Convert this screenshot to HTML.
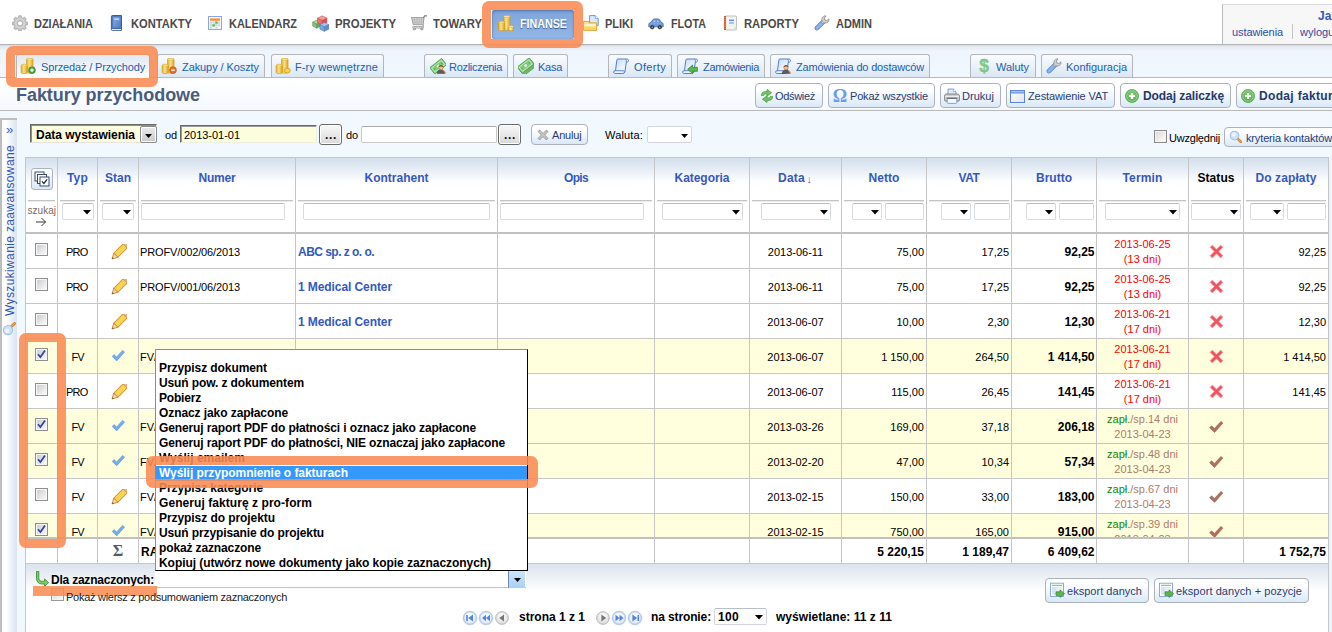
<!DOCTYPE html><html><head><meta charset="utf-8"><title>Faktury przychodowe</title><style>html,body{margin:0;padding:0;background:#fff}
#root{position:relative;width:1332px;height:632px;overflow:hidden;font-family:"Liberation Sans",sans-serif;background:#fff}
#root div,#root span,#root svg{position:absolute}
#root span span{position:static}
.t{white-space:pre}</style></head><body><div id="root"><svg width="0" height="0" style="left:0;top:0"><defs><linearGradient id="gold" x1="0" x2="1" y1="0" y2="0"><stop offset="0" stop-color="#eab52a"/><stop offset=".42" stop-color="#fff3ac"/><stop offset="1" stop-color="#e5a81a"/></linearGradient><linearGradient id="wing" x1="0" x2="1" y1="0" y2="1"><stop offset="0" stop-color="#ffffff"/><stop offset="1" stop-color="#dfe3ea"/></linearGradient><linearGradient id="scr" x1="0" x2="1" y1="0" y2="1"><stop offset="0" stop-color="#c3d8f7"/><stop offset=".6" stop-color="#eef4fd"/><stop offset="1" stop-color="#d5e3f9"/></linearGradient><linearGradient id="bookg" x1="0" x2="1" y1="0" y2="1"><stop offset="0" stop-color="#88aee2"/><stop offset="1" stop-color="#4c7cc4"/></linearGradient><radialGradient id="pgb" cx=".5" cy=".35" r=".75"><stop offset="0" stop-color="#ffffff"/><stop offset="1" stop-color="#d5e2f6"/></radialGradient><radialGradient id="pgg" cx=".5" cy=".35" r=".75"><stop offset="0" stop-color="#ffffff"/><stop offset="1" stop-color="#d4d4d4"/></radialGradient><radialGradient id="addg" cx=".5" cy=".4" r=".7"><stop offset="0" stop-color="#86cf7e"/><stop offset="1" stop-color="#46a33f"/></radialGradient></defs></svg><div style="left:0px;top:44px;width:1332px;height:1px;background:#b4b4b4"></div><div style="left:0px;top:45px;width:1332px;height:1px;background:#d9dde2"></div><div style="left:0px;top:46px;width:1332px;height:31px;background:linear-gradient(#e3e8f0 0,#eef5fd 5px,#f0f7fe 100%)"></div><div style="left:0px;top:77px;width:1332px;height:1px;background:#b9b9b9"></div><div style="left:0px;top:78px;width:1332px;height:32px;background:linear-gradient(#ffffff,#f5f9fe)"></div><div style="left:0px;top:110px;width:1332px;height:1px;background:#b9b9b9"></div><div style="left:0px;top:111px;width:1332px;height:521px;background:#f1f8fe"></div><div style="left:25px;top:563px;width:1304px;height:69px;background:#fff"></div><div style="left:25px;top:563px;width:1304px;height:28px;background:linear-gradient(#d9e2ec,#ffffff)"></div><div style="left:1222px;top:4px;width:110px;height:39px;background:#f7f7f7;border-left:1px solid #b9b9b9;border-top:1px solid #dcdcdc"></div><span id="t1" class="t" style="top:8.0px;font-size:12px;line-height:16px;color:#3a56c0;font-weight:bold;left:1318px;">Ja</span><span id="t2" class="t" style="letter-spacing:-0.098px;top:25.0px;font-size:11px;line-height:14px;color:#2f4aa8;left:1232px;">ustawienia</span><div style="left:1292px;top:24px;width:1px;height:15px;background:#c4c4c4"></div><span id="t3" class="t" style="top:25.0px;font-size:11px;line-height:14px;color:#2f4aa8;left:1300px;">wylogu</span><span id="t4" class="t" style="transform:scaleX(0.8423);transform-origin:0 50%;top:15.0px;font-size:13px;line-height:17px;color:#4a4a4a;font-weight:bold;left:34px;text-shadow:0 1px 0 #fff;">DZIAŁANIA</span><span id="t5" class="t" style="transform:scaleX(0.8560);transform-origin:0 50%;top:15.0px;font-size:13px;line-height:17px;color:#4a4a4a;font-weight:bold;left:131px;text-shadow:0 1px 0 #fff;">KONTAKTY</span><span id="t6" class="t" style="transform:scaleX(0.8406);transform-origin:0 50%;top:15.0px;font-size:13px;line-height:17px;color:#4a4a4a;font-weight:bold;left:229px;text-shadow:0 1px 0 #fff;">KALENDARZ</span><span id="t7" class="t" style="transform:scaleX(0.8705);transform-origin:0 50%;top:15.0px;font-size:13px;line-height:17px;color:#4a4a4a;font-weight:bold;left:335px;text-shadow:0 1px 0 #fff;">PROJEKTY</span><span id="t8" class="t" style="transform:scaleX(0.8697);transform-origin:0 50%;top:15.0px;font-size:13px;line-height:17px;color:#4a4a4a;font-weight:bold;left:433px;text-shadow:0 1px 0 #fff;">TOWARY</span><div style="left:491.6px;top:9.6px;width:82px;height:29px;background:linear-gradient(#7fa5da,#92b7e6);border-radius:2px;box-shadow:inset 0 1px 3px rgba(40,70,130,.55)"></div><span id="t9" class="t" style="transform:scaleX(0.8237);transform-origin:0 50%;top:15.0px;font-size:13px;line-height:17px;color:#fff;font-weight:bold;left:520px;text-shadow:0 1px 1px #3a5a95;">FINANSE</span><span id="t10" class="t" style="transform:scaleX(0.8425);transform-origin:0 50%;top:15.0px;font-size:13px;line-height:17px;color:#4a4a4a;font-weight:bold;left:605px;text-shadow:0 1px 0 #fff;">PLIKI</span><span id="t11" class="t" style="transform:scaleX(0.8263);transform-origin:0 50%;top:15.0px;font-size:13px;line-height:17px;color:#4a4a4a;font-weight:bold;left:671px;text-shadow:0 1px 0 #fff;">FLOTA</span><span id="t12" class="t" style="transform:scaleX(0.8653);transform-origin:0 50%;top:15.0px;font-size:13px;line-height:17px;color:#4a4a4a;font-weight:bold;left:744px;text-shadow:0 1px 0 #fff;">RAPORTY</span><span id="t13" class="t" style="transform:scaleX(0.8449);transform-origin:0 50%;top:15.0px;font-size:13px;line-height:17px;color:#4a4a4a;font-weight:bold;left:836px;text-shadow:0 1px 0 #fff;">ADMIN</span><svg style="left:12px;top:15px;" width="16" height="16" viewBox="0 0 16 16"><g fill="#c6c6c6" stroke="#9b9b9b" stroke-width=".7" stroke-linejoin="round"><path d="M6.600 0.500h2.800l.400 2.100 1.300.550 1.800-1.200 2 2-1.200 1.800.550 1.300 2.100.400v2.800l-2.100.400-.550 1.300 1.200 1.800-2 2-1.800-1.200-1.300.550-.400 2.100H6.600l-.400-2.100-1.300-.550-1.800 1.200-2-2 1.200-1.800-.550-1.300-2.100-.400V7.450l2.100-.400.550-1.300-1.200-1.800 2-2 1.800 1.200 1.300-.550z" transform="translate(.6 .3) scale(.925)"/></g><circle cx="8" cy="8.300" r="4.300" fill="none" stroke="#dadada" stroke-width="1.200"/><circle cx="8" cy="8.300" r="2.500" fill="#fff" stroke="#9b9b9b" stroke-width=".7"/></svg><svg style="left:108.5px;top:15px;" width="16" height="16" viewBox="0 0 16 16"><path d="M2.400 1.500c0-.600.400-1 1-1H12.500v13H3.400c-.600 0-1 .400-1 1z" fill="#4f7cc0" stroke="#2d5592" stroke-width=".9"/><path d="M12.500 13.500v2H3.400c-.600 0-1-.400-1-1s.400-1 1-1z" fill="#e9eef6" stroke="#2d5592" stroke-width=".8"/><path d="M4.200 2.200h7.400v10.400H4.200z" fill="url(#bookg)"/><rect x="5.500" y="3.600" width="4.600" height="1.100" fill="#e6eefb"/></svg><svg style="left:208px;top:16px;" width="14" height="14" viewBox="0 0 14 14"><rect x=".5" y=".5" width="13" height="13" fill="#f4f6fa" stroke="#86a8e2"/><rect x="2" y="2" width="10" height="2.800" fill="#f5903e"/><rect x="2" y="2" width="10" height="1" fill="#fbb878"/><g fill="#c4d2e8"><rect x="2" y="5.800" width="2" height="1.800"/><rect x="4.700" y="5.800" width="2" height="1.800"/><rect x="10" y="5.800" width="2" height="1.800"/><rect x="2" y="8.400" width="2" height="1.800"/><rect x="7.400" y="8.400" width="2" height="1.800"/><rect x="10" y="8.400" width="2" height="1.800"/><rect x="2" y="11" width="2" height="1.400"/><rect x="7.400" y="11" width="2" height="1.400"/></g><g fill="#5aae48" stroke="#8fd080" stroke-width=".5"><rect x="7.300" y="5.700" width="2.300" height="2.100"/><rect x="4.600" y="8.300" width="2.300" height="2.100"/></g></svg><svg style="left:312px;top:15px;" width="17" height="17" viewBox="0 0 16 16"><path d="M4.4 4.8L8.2 6.699999999999999L4.4 8.6L0.6000000000000005 6.699999999999999z" fill="#a8d69c" stroke="#5a9850" stroke-width=".5" stroke-linejoin="round"/><path d="M0.6000000000000005 6.699999999999999L4.4 8.6L4.4 12.399999999999999L0.6000000000000005 10.5z" fill="#86c078" stroke="#5a9850" stroke-width=".5" stroke-linejoin="round"/><path d="M8.2 6.699999999999999L4.4 8.6L4.4 12.399999999999999L8.2 10.5z" fill="#6aa85e" stroke="#5a9850" stroke-width=".5" stroke-linejoin="round"/><path d="M9.6 0.7999999999999998L14.0 3.0L9.6 5.2L5.199999999999999 3.0z" fill="#f5a0a0" stroke="#c84444" stroke-width=".5" stroke-linejoin="round"/><path d="M5.199999999999999 3.0L9.6 5.2L9.6 9.600000000000001L5.199999999999999 7.4z" fill="#ee7070" stroke="#c84444" stroke-width=".5" stroke-linejoin="round"/><path d="M14.0 3.0L9.6 5.2L9.6 9.600000000000001L14.0 7.4z" fill="#dc5050" stroke="#c84444" stroke-width=".5" stroke-linejoin="round"/><path d="M11.6 6.999999999999999L15.8 9.1L11.6 11.2L7.3999999999999995 9.1z" fill="#a6c6ee" stroke="#4a78b8" stroke-width=".5" stroke-linejoin="round"/><path d="M7.3999999999999995 9.1L11.6 11.2L11.6 15.399999999999999L7.3999999999999995 13.299999999999999z" fill="#7fa8de" stroke="#4a78b8" stroke-width=".5" stroke-linejoin="round"/><path d="M15.8 9.1L11.6 11.2L11.6 15.399999999999999L15.8 13.299999999999999z" fill="#5f8cca" stroke="#4a78b8" stroke-width=".5" stroke-linejoin="round"/></svg><svg style="left:411px;top:15px;" width="16" height="16" viewBox="0 0 16 16"><path d="M.5 2.500H13L12.100 9.700H2.300z" fill="#dcdcdc" stroke="#8c8c8c" stroke-width=".8" stroke-linejoin="round"/><path d="M1 4.300h11.700M1.400 6.100h11M1.800 7.900h10.500M3.400 2.500l.8 7.200M5.800 2.500l.4 7.200M8.200 2.500l0 7.200M10.600 2.500l-.4 7.200" stroke="#a2a2a2" stroke-width=".5"/><path d="M12.600 2.700l.9-1.900h2.200" fill="none" stroke="#7c7c7c" stroke-width="1.200" stroke-linecap="round"/><path d="M12.300 9.700l-.3 2.300" stroke="#8c8c8c" stroke-width=".9"/><rect x="1.600" y="11.500" width="11" height="1.600" rx=".8" fill="#ececec" stroke="#8c8c8c" stroke-width=".7"/><ellipse cx="3.400" cy="14" rx="1.300" ry="1" fill="#c4c4c4" stroke="#7c7c7c" stroke-width=".6"/><ellipse cx="10.800" cy="14" rx="1.300" ry="1" fill="#c4c4c4" stroke="#7c7c7c" stroke-width=".6"/></svg><svg style="left:498px;top:15px;" width="16" height="16" viewBox="0 0 16 16"><path d="M5.6 1.4v12.799999999999999a3.2 1.0 0 0 0 6.4 0v-12.799999999999999z" fill="url(#gold)" stroke="#cf9a14" stroke-width=".7"/><ellipse cx="8.8" cy="1.4" rx="3.2" ry="1.0" fill="#fdeea0" stroke="#d9a51c" stroke-width=".6"/><path d="M5.6 3.4a3.2 1.0 0 0 0 6.4 0" fill="none" stroke="#dba622" stroke-width=".45"/><path d="M5.6 5.3a3.2 1.0 0 0 0 6.4 0" fill="none" stroke="#dba622" stroke-width=".45"/><path d="M5.6 7.199999999999999a3.2 1.0 0 0 0 6.4 0" fill="none" stroke="#dba622" stroke-width=".45"/><path d="M5.6 9.1a3.2 1.0 0 0 0 6.4 0" fill="none" stroke="#dba622" stroke-width=".45"/><path d="M5.6 11.0a3.2 1.0 0 0 0 6.4 0" fill="none" stroke="#dba622" stroke-width=".45"/><path d="M5.6 12.9a3.2 1.0 0 0 0 6.4 0" fill="none" stroke="#dba622" stroke-width=".45"/><path d="M0.5 7.2v7.6000000000000005a2.95 1.0 0 0 0 5.9 0v-7.6000000000000005z" fill="url(#gold)" stroke="#cf9a14" stroke-width=".7"/><ellipse cx="3.45" cy="7.2" rx="2.95" ry="1.0" fill="#fdeea0" stroke="#d9a51c" stroke-width=".6"/><path d="M0.5 9.2a2.95 1.0 0 0 0 5.9 0" fill="none" stroke="#dba622" stroke-width=".45"/><path d="M0.5 11.1a2.95 1.0 0 0 0 5.9 0" fill="none" stroke="#dba622" stroke-width=".45"/><path d="M0.5 13.0a2.95 1.0 0 0 0 5.9 0" fill="none" stroke="#dba622" stroke-width=".45"/><path d="M0.5 14.9a2.95 1.0 0 0 0 5.9 0" fill="none" stroke="#dba622" stroke-width=".45"/><path d="M10.2 11.4v3.4000000000000004a2.7 1.0 0 0 0 5.4 0v-3.4000000000000004z" fill="url(#gold)" stroke="#cf9a14" stroke-width=".7"/><ellipse cx="12.899999999999999" cy="11.4" rx="2.7" ry="1.0" fill="#fdeea0" stroke="#d9a51c" stroke-width=".6"/></svg><svg style="left:583px;top:15px;" width="16" height="16" viewBox="0 0 16 16"><path d="M6.600.600h5.600l3 3v7h-8.600z" fill="#dde9fb" stroke="#5d8ad0" stroke-width=".9"/><path d="M12.200.600v3h3" fill="#fff" stroke="#5d8ad0" stroke-width=".7"/><path d="M.6 6.400h4.800l1 1.400h7.200v7.600H.6z" fill="#f9e28c" stroke="#e09a2e" stroke-width=".9"/><path d="M1.400 9h11.400v2H1.400z" fill="#fef6cc"/><path d="M1.400 12.600h11.400v2H1.400z" fill="#f4d25e"/></svg><svg style="left:648px;top:15px;" width="16" height="16" viewBox="0 0 16 16"><path d="M.8 9.800c0-1.600 1-2.300 2.400-2.500l1.500-2.500c.4-.600 1-.900 1.800-.900h3.400c.8 0 1.400.300 1.800.900l1.500 2.500c1.300.200 2 .900 2 2.500v2H.8z" fill="#7ba6e4" stroke="#3a62a6" stroke-width=".8"/><path d="M4.600 7.200l1.100-2h2v2zM8.500 5.200h1.900l1.100 2h-3z" fill="#cfe0f6" stroke="#3a62a6" stroke-width=".4"/><path d="M1.200 10h13.600" stroke="#5f8cd0" stroke-width=".8"/><circle cx="4.200" cy="12.200" r="1.800" fill="#3c3c3c" stroke="#1c1c1c" stroke-width=".5"/><circle cx="11.800" cy="12.200" r="1.800" fill="#3c3c3c" stroke="#1c1c1c" stroke-width=".5"/><circle cx="4.200" cy="12.200" r=".7" fill="#b4b4b4"/><circle cx="11.800" cy="12.200" r=".7" fill="#b4b4b4"/></svg><svg style="left:723px;top:15px;" width="16" height="16" viewBox="0 0 16 16"><rect x="2.2" y="1" width="11.3" height="14" rx="1" fill="#f3f3f3" stroke="#b9b9b9" stroke-width=".9"/><rect x="1" y="1" width="2" height="14" fill="#c0582a"/><g stroke="#e9a47c" stroke-width=".6"><path d="M.6 2.6h2.8M.6 4.4h2.8M.6 6.2h2.8M.6 8h2.8M.6 9.8h2.8M.6 11.6h2.8M.6 13.4h2.8"/></g><rect x="6" y="4.6" width="5" height="1.5" fill="#5b8fe0"/><rect x="6" y="7.4" width="5" height="1.2" fill="#7aa4e6"/><path d="M13.4 10.5l-3.6 4.4h3.6z" fill="#dcdcdc"/></svg><svg style="left:814px;top:15px;" width="16" height="16" viewBox="0 0 16 16"><path d="M2.900 13.100L9.200 6.800" stroke="#4f7ed0" stroke-width="4.600" stroke-linecap="round"/><path d="M2.900 13.100L9.200 6.800" stroke="#8db3ec" stroke-width="3.100" stroke-linecap="round"/><path d="M8.200 6.300c-.900-1.700-.300-3.900 1.400-4.900.800-.500 1.600-.600 2.400-.500L10.400 3l.500 2 2 .500 2.100-1.600c.100.800 0 1.600-.500 2.400-1 1.700-3.200 2.300-4.900 1.400L8.400 8.600 7.200 7.400z" fill="#cfcfcf" stroke="#8b8b8b" stroke-width=".8" stroke-linejoin="round"/></svg><div style="left:16px;top:54px;width:132px;height:23px;background:linear-gradient(#dfe8f3,#ffffff);border:1px solid #b4b6ba;border-bottom:none;border-radius:3px 3px 0 0;"></div><svg style="left:20px;top:58px;" width="16" height="16" viewBox="0 0 16 16"><path d="M6.6 1.2v13.0a3.2 1.0 0 0 0 6.4 0v-13.0z" fill="url(#gold)" stroke="#cf9a14" stroke-width=".7"/><ellipse cx="9.8" cy="1.2" rx="3.2" ry="1.0" fill="#fdeea0" stroke="#d9a51c" stroke-width=".6"/><path d="M6.6 3.2a3.2 1.0 0 0 0 6.4 0" fill="none" stroke="#dba622" stroke-width=".45"/><path d="M6.6 5.1a3.2 1.0 0 0 0 6.4 0" fill="none" stroke="#dba622" stroke-width=".45"/><path d="M6.6 7.0a3.2 1.0 0 0 0 6.4 0" fill="none" stroke="#dba622" stroke-width=".45"/><path d="M6.6 8.9a3.2 1.0 0 0 0 6.4 0" fill="none" stroke="#dba622" stroke-width=".45"/><path d="M6.6 10.8a3.2 1.0 0 0 0 6.4 0" fill="none" stroke="#dba622" stroke-width=".45"/><path d="M6.6 12.700000000000001a3.2 1.0 0 0 0 6.4 0" fill="none" stroke="#dba622" stroke-width=".45"/><path d="M1.2 7.2v7.3999999999999995a3.0 1.0 0 0 0 6.0 0v-7.3999999999999995z" fill="url(#gold)" stroke="#cf9a14" stroke-width=".7"/><ellipse cx="4.2" cy="7.2" rx="3.0" ry="1.0" fill="#fdeea0" stroke="#d9a51c" stroke-width=".6"/><path d="M1.2 9.2a3.0 1.0 0 0 0 6.0 0" fill="none" stroke="#dba622" stroke-width=".45"/><path d="M1.2 11.1a3.0 1.0 0 0 0 6.0 0" fill="none" stroke="#dba622" stroke-width=".45"/><path d="M1.2 13.0a3.0 1.0 0 0 0 6.0 0" fill="none" stroke="#dba622" stroke-width=".45"/><circle cx="12" cy="12.2" r="3.4" fill="#4aa63c" stroke="#2f7f28" stroke-width=".6"/><path d="M10.2 12.2h3.6M12 10.4v3.6" stroke="#fff" stroke-width="1.3"/></svg><span id="t14" class="t" style="letter-spacing:-0.150px;top:59.5px;font-size:11px;line-height:14px;color:#1b5fae;left:41px;">Sprzedaż / Przychody</span><div style="left:157px;top:54px;width:106px;height:22px;background:linear-gradient(#fafcfe,#dbe7f4);border:1px solid #b4b6ba;border-bottom:none;border-radius:3px 3px 0 0;"></div><svg style="left:161px;top:58px;" width="16" height="16" viewBox="0 0 16 16"><path d="M6.6 1.2v13.0a3.2 1.0 0 0 0 6.4 0v-13.0z" fill="url(#gold)" stroke="#cf9a14" stroke-width=".7"/><ellipse cx="9.8" cy="1.2" rx="3.2" ry="1.0" fill="#fdeea0" stroke="#d9a51c" stroke-width=".6"/><path d="M6.6 3.2a3.2 1.0 0 0 0 6.4 0" fill="none" stroke="#dba622" stroke-width=".45"/><path d="M6.6 5.1a3.2 1.0 0 0 0 6.4 0" fill="none" stroke="#dba622" stroke-width=".45"/><path d="M6.6 7.0a3.2 1.0 0 0 0 6.4 0" fill="none" stroke="#dba622" stroke-width=".45"/><path d="M6.6 8.9a3.2 1.0 0 0 0 6.4 0" fill="none" stroke="#dba622" stroke-width=".45"/><path d="M6.6 10.8a3.2 1.0 0 0 0 6.4 0" fill="none" stroke="#dba622" stroke-width=".45"/><path d="M6.6 12.700000000000001a3.2 1.0 0 0 0 6.4 0" fill="none" stroke="#dba622" stroke-width=".45"/><path d="M1.2 7.2v7.3999999999999995a3.0 1.0 0 0 0 6.0 0v-7.3999999999999995z" fill="url(#gold)" stroke="#cf9a14" stroke-width=".7"/><ellipse cx="4.2" cy="7.2" rx="3.0" ry="1.0" fill="#fdeea0" stroke="#d9a51c" stroke-width=".6"/><path d="M1.2 9.2a3.0 1.0 0 0 0 6.0 0" fill="none" stroke="#dba622" stroke-width=".45"/><path d="M1.2 11.1a3.0 1.0 0 0 0 6.0 0" fill="none" stroke="#dba622" stroke-width=".45"/><path d="M1.2 13.0a3.0 1.0 0 0 0 6.0 0" fill="none" stroke="#dba622" stroke-width=".45"/><circle cx="12" cy="12.2" r="3.4" fill="#e8702a" stroke="#b54d14" stroke-width=".6"/><path d="M10.2 12.2h3.6" stroke="#fff" stroke-width="1.4"/></svg><span id="t15" class="t" style="letter-spacing:-0.084px;top:59.5px;font-size:11px;line-height:14px;color:#1b5fae;left:182px;">Zakupy / Koszty</span><div style="left:271px;top:54px;width:111px;height:22px;background:linear-gradient(#fafcfe,#dbe7f4);border:1px solid #b4b6ba;border-bottom:none;border-radius:3px 3px 0 0;"></div><svg style="left:275px;top:58px;" width="16" height="16" viewBox="0 0 16 16"><path d="M6.6 1.2v13.0a3.2 1.0 0 0 0 6.4 0v-13.0z" fill="url(#gold)" stroke="#cf9a14" stroke-width=".7"/><ellipse cx="9.8" cy="1.2" rx="3.2" ry="1.0" fill="#fdeea0" stroke="#d9a51c" stroke-width=".6"/><path d="M6.6 3.2a3.2 1.0 0 0 0 6.4 0" fill="none" stroke="#dba622" stroke-width=".45"/><path d="M6.6 5.1a3.2 1.0 0 0 0 6.4 0" fill="none" stroke="#dba622" stroke-width=".45"/><path d="M6.6 7.0a3.2 1.0 0 0 0 6.4 0" fill="none" stroke="#dba622" stroke-width=".45"/><path d="M6.6 8.9a3.2 1.0 0 0 0 6.4 0" fill="none" stroke="#dba622" stroke-width=".45"/><path d="M6.6 10.8a3.2 1.0 0 0 0 6.4 0" fill="none" stroke="#dba622" stroke-width=".45"/><path d="M6.6 12.700000000000001a3.2 1.0 0 0 0 6.4 0" fill="none" stroke="#dba622" stroke-width=".45"/><path d="M1.2 7.2v7.3999999999999995a3.0 1.0 0 0 0 6.0 0v-7.3999999999999995z" fill="url(#gold)" stroke="#cf9a14" stroke-width=".7"/><ellipse cx="4.2" cy="7.2" rx="3.0" ry="1.0" fill="#fdeea0" stroke="#d9a51c" stroke-width=".6"/><path d="M1.2 9.2a3.0 1.0 0 0 0 6.0 0" fill="none" stroke="#dba622" stroke-width=".45"/><path d="M1.2 11.1a3.0 1.0 0 0 0 6.0 0" fill="none" stroke="#dba622" stroke-width=".45"/><path d="M1.2 13.0a3.0 1.0 0 0 0 6.0 0" fill="none" stroke="#dba622" stroke-width=".45"/><ellipse cx="12.3" cy="12.6" rx="3" ry="2.4" fill="#f7d34a" stroke="#c99a12" stroke-width=".7"/></svg><span id="t16" class="t" style="letter-spacing:0.114px;top:59.5px;font-size:11px;line-height:14px;color:#1b5fae;left:295px;">F-ry wewnętrzne</span><div style="left:424px;top:54px;width:82px;height:22px;background:linear-gradient(#fafcfe,#dbe7f4);border:1px solid #b4b6ba;border-bottom:none;border-radius:3px 3px 0 0;"></div><svg style="left:430px;top:58px;" width="16" height="16" viewBox="0 0 16 16"><g transform="rotate(-38 8 8)"><rect x=".5" y="4.300" width="15" height="8" fill="#84cc80" stroke="#4f9f4c" stroke-width=".8"/><rect x="1.900" y="5.600" width="12.200" height="5.400" fill="none" stroke="#d4efd0" stroke-width=".7"/><ellipse cx="8" cy="8.300" rx="2.100" ry="2" fill="#d4efd0" stroke="#4f9f4c" stroke-width=".5"/><circle cx="3.500" cy="8.300" r=".7" fill="#4f9f4c"/><circle cx="12.500" cy="8.300" r=".7" fill="#4f9f4c"/></g><path d="M7.200 15.600c0-2.400 1.400-3.700 3.800-3.700s3.800 1.300 3.800 3.700z" fill="#5c5c5c" stroke="#3a3a3a" stroke-width=".5"/><circle cx="11" cy="9.600" r="2.200" fill="#eebf92" stroke="#9a6a3a" stroke-width=".5"/><path d="M8.600 9.200c0-2.600 4.800-2.600 4.800 0-.9-.9-3.900-.9-4.800 0z" fill="#7a4a22"/><path d="M14.300 13.200l1.200 1.600" stroke="#e89a4a" stroke-width="1.300" stroke-linecap="round"/></svg><span id="t17" class="t" style="letter-spacing:-0.295px;top:59.5px;font-size:11px;line-height:14px;color:#1b5fae;left:449px;">Rozliczenia</span><div style="left:513px;top:54px;width:53px;height:22px;background:linear-gradient(#fafcfe,#dbe7f4);border:1px solid #b4b6ba;border-bottom:none;border-radius:3px 3px 0 0;"></div><svg style="left:518px;top:58px;" width="16" height="16" viewBox="0 0 16 16"><g transform="rotate(-38 8 8)"><rect x=".5" y="6.300" width="15" height="8" fill="#6fba6a" stroke="#4f9f4c" stroke-width=".8"/><rect x=".5" y="3.500" width="15" height="8" fill="#84cc80" stroke="#4f9f4c" stroke-width=".8"/><rect x="1.900" y="4.800" width="12.200" height="5.400" fill="none" stroke="#d4efd0" stroke-width=".7"/><ellipse cx="8" cy="7.500" rx="2.100" ry="2" fill="#d4efd0" stroke="#4f9f4c" stroke-width=".5"/><circle cx="3.500" cy="7.500" r=".7" fill="#4f9f4c"/><circle cx="12.500" cy="7.500" r=".7" fill="#4f9f4c"/></g></svg><span id="t18" class="t" style="letter-spacing:-0.270px;top:59.5px;font-size:11px;line-height:14px;color:#1b5fae;left:538px;">Kasa</span><div style="left:608px;top:54px;width:62px;height:22px;background:linear-gradient(#fafcfe,#dbe7f4);border:1px solid #b4b6ba;border-bottom:none;border-radius:3px 3px 0 0;"></div><svg style="left:613px;top:58px;" width="16" height="16" viewBox="0 0 16 16"><path d="M4.600 1h9c1.300 0 1.900.700 1.900 1.600 0 .900-.600 1.500-1.500 1.500h-.700l-1.300 9.300c-.200 1.400-1 2.100-2.300 2.100H2.200c-1 0-1.600-.600-1.600-1.400 0-.800.500-1.400 1.300-1.400h.600l1.200-9.600C3.900 2 4.100 1.400 4.600 1z" fill="url(#scr)" stroke="#4f7fd2" stroke-width="1"/><path d="M2.400 12.700h8c.600 0 1 .500 1 1.200 0 .600-.300 1.200-.900 1.500" fill="none" stroke="#4f7fd2" stroke-width=".9"/><path d="M13.300 4.100l.100-1.100c0-.800-.300-1.500-1-1.900" fill="none" stroke="#4f7fd2" stroke-width=".8"/></svg><span id="t19" class="t" style="letter-spacing:0.341px;top:59.5px;font-size:11px;line-height:14px;color:#1b5fae;left:634px;">Oferty</span><div style="left:677px;top:54px;width:86px;height:22px;background:linear-gradient(#fafcfe,#dbe7f4);border:1px solid #b4b6ba;border-bottom:none;border-radius:3px 3px 0 0;"></div><svg style="left:682px;top:58px;" width="16" height="16" viewBox="0 0 16 16"><path d="M4.600 1h9c1.300 0 1.900.700 1.900 1.600 0 .900-.600 1.500-1.500 1.500h-.700l-1.300 9.300c-.200 1.400-1 2.100-2.300 2.100H2.200c-1 0-1.600-.600-1.600-1.400 0-.800.500-1.400 1.300-1.400h.600l1.200-9.600C3.900 2 4.100 1.400 4.600 1z" fill="url(#scr)" stroke="#4f7fd2" stroke-width="1"/><path d="M2.400 12.700h8c.600 0 1 .500 1 1.200 0 .600-.300 1.200-.900 1.500" fill="none" stroke="#4f7fd2" stroke-width=".9"/><path d="M13.300 4.100l.100-1.100c0-.800-.300-1.500-1-1.900" fill="none" stroke="#4f7fd2" stroke-width=".8"/><path d="M15.400 9.300v4h-4.800v2.300L5.600 11.300l5-4.300v2.300z" fill="#5cb84a" stroke="#2f7f28" stroke-width=".7"/></svg><span id="t20" class="t" style="letter-spacing:-0.331px;top:59.5px;font-size:11px;line-height:14px;color:#1b5fae;left:703px;">Zamówienia</span><div style="left:770px;top:54px;width:158px;height:22px;background:linear-gradient(#fafcfe,#dbe7f4);border:1px solid #b4b6ba;border-bottom:none;border-radius:3px 3px 0 0;"></div><svg style="left:775px;top:58px;" width="16" height="16" viewBox="0 0 16 16"><path d="M4.600 1h9c1.300 0 1.900.700 1.900 1.600 0 .900-.600 1.500-1.500 1.500h-.700l-1.300 9.300c-.200 1.400-1 2.100-2.300 2.100H2.200c-1 0-1.600-.600-1.600-1.400 0-.800.500-1.400 1.300-1.400h.600l1.200-9.600C3.900 2 4.100 1.400 4.600 1z" fill="url(#scr)" stroke="#4f7fd2" stroke-width="1"/><path d="M2.400 12.700h8c.600 0 1 .500 1 1.200 0 .600-.300 1.200-.900 1.500" fill="none" stroke="#4f7fd2" stroke-width=".9"/><path d="M13.300 4.100l.100-1.100c0-.800-.300-1.500-1-1.900" fill="none" stroke="#4f7fd2" stroke-width=".8"/><path d="M7.200 15.600c0-2.400 1.400-3.700 3.800-3.700s3.800 1.300 3.800 3.700z" fill="#5c5c5c" stroke="#3a3a3a" stroke-width=".5"/><circle cx="11" cy="9.600" r="2.200" fill="#eebf92" stroke="#9a6a3a" stroke-width=".5"/><path d="M8.600 9.200c0-2.600 4.800-2.600 4.800 0-.9-.9-3.900-.9-4.800 0z" fill="#7a4a22"/><path d="M14.300 13.200l1.200 1.600" stroke="#e89a4a" stroke-width="1.300" stroke-linecap="round"/></svg><span id="t21" class="t" style="letter-spacing:-0.177px;top:59.5px;font-size:11px;line-height:14px;color:#1b5fae;left:796px;">Zamówienia do dostawców</span><div style="left:970px;top:54px;width:64px;height:22px;background:linear-gradient(#fafcfe,#dbe7f4);border:1px solid #b4b6ba;border-bottom:none;border-radius:3px 3px 0 0;"></div><svg style="left:976px;top:58px;" width="16" height="16" viewBox="0 0 16 16"><text x="8" y="14.300" text-anchor="middle" font-family="Liberation Sans" font-weight="bold" font-size="17.500" fill="#86c984" stroke="#6fbb6d" stroke-width=".3">$</text></svg><span id="t22" class="t" style="letter-spacing:-0.036px;top:59.5px;font-size:11px;line-height:14px;color:#1b5fae;left:996px;">Waluty</span><div style="left:1041px;top:54px;width:90px;height:22px;background:linear-gradient(#fafcfe,#dbe7f4);border:1px solid #b4b6ba;border-bottom:none;border-radius:3px 3px 0 0;"></div><svg style="left:1046px;top:58px;" width="16" height="16" viewBox="0 0 16 16"><path d="M2.900 13.100L9.200 6.800" stroke="#4f7ed0" stroke-width="4.600" stroke-linecap="round"/><path d="M2.900 13.100L9.200 6.800" stroke="#8db3ec" stroke-width="3.100" stroke-linecap="round"/><path d="M8.200 6.300c-.900-1.700-.300-3.900 1.400-4.900.800-.500 1.600-.600 2.400-.500L10.400 3l.500 2 2 .500 2.100-1.600c.100.800 0 1.600-.500 2.400-1 1.700-3.200 2.300-4.900 1.400L8.400 8.600 7.200 7.400z" fill="#cfcfcf" stroke="#8b8b8b" stroke-width=".8" stroke-linejoin="round"/></svg><span id="t23" class="t" style="letter-spacing:-0.013px;top:59.5px;font-size:11px;line-height:14px;color:#1b5fae;left:1066px;">Konfiguracja</span><span id="t24" class="t" style="letter-spacing:-0.055px;top:84.0px;font-size:18px;line-height:22px;color:#4a5b7c;font-weight:bold;left:16px;">Faktury przychodowe</span><div style="left:755px;top:83px;width:66px;height:23px;background:linear-gradient(#ffffff 25%,#d9e8f8);border:1px solid #adb1b8;border-radius:4px;"></div><svg style="left:759px;top:88px;" width="16" height="16" viewBox="0 0 16 16"><g fill="#72c25e" stroke="#3f9a3c" stroke-width=".7" stroke-linejoin="round"><path d="M2.400 7.600C2.200 4.600 4.400 3.400 8 3.400V1.400l4.600 3.400L8 8.200V6C5.800 6 4.800 6.400 4.600 7.600z"/><path d="M13.600 8.400c.2 3-2 4.200-5.600 4.200v2L3.400 11.200 8 7.800V10c2.200 0 3.200-.4 3.400-1.600z"/></g></svg><span id="t25" class="t" style="letter-spacing:-0.312px;top:89.0px;font-size:11px;line-height:14px;color:#2a3c70;left:775px;">Odśwież</span><div style="left:828px;top:83px;width:105px;height:23px;background:linear-gradient(#ffffff 25%,#d9e8f8);border:1px solid #adb1b8;border-radius:4px;"></div><svg style="left:832px;top:88px;" width="16" height="16" viewBox="0 0 16 16"><text x="8" y="14" text-anchor="middle" font-family="Liberation Serif" font-weight="bold" font-size="18" fill="#6b9cec">Ω</text></svg><span id="t26" class="t" style="letter-spacing:-0.180px;top:89.0px;font-size:11px;line-height:14px;color:#2a3c70;left:850px;">Pokaż wszystkie</span><div style="left:940px;top:83px;width:59px;height:23px;background:linear-gradient(#ffffff 25%,#d9e8f8);border:1px solid #adb1b8;border-radius:4px;"></div><svg style="left:944px;top:88px;" width="16" height="16" viewBox="0 0 16 16"><path d="M4 6.500V1h5.400L12 3.600v2.900z" fill="#dce9fb" stroke="#5f8fd8" stroke-width=".8"/><path d="M9.400 1v2.600H12" fill="#fff" stroke="#5f8fd8" stroke-width=".6"/><path d="M2.600 6h10.800c1.400 0 2.200 1 2.200 2.400v3.400c0 .8-.5 1.300-1.200 1.300H1.600c-.7 0-1.200-.5-1.200-1.300V8.400C.4 7 1.200 6 2.600 6z" fill="#c9c9c9" stroke="#6e6e6e" stroke-width=".8"/><path d="M1.200 8.400h13.600" stroke="#f1f1f1" stroke-width="1"/><path d="M3.200 10.400h9.600v4c0 .6-.4 1-1 1H4.200c-.6 0-1-.4-1-1z" fill="#f4f8fe" stroke="#5f8fd8" stroke-width=".8"/><path d="M3 10.200h10" stroke="#555" stroke-width=".9"/></svg><span id="t27" class="t" style="letter-spacing:0.034px;top:89.0px;font-size:11px;line-height:14px;color:#2a3c70;left:962px;">Drukuj</span><div style="left:1006px;top:83px;width:107px;height:23px;background:linear-gradient(#ffffff 25%,#d9e8f8);border:1px solid #adb1b8;border-radius:4px;"></div><svg style="left:1010px;top:89.5px;" width="15" height="13" viewBox="0 0 15 13"><rect x=".5" y=".5" width="14" height="12" fill="url(#wing)" stroke="#5c86cf" stroke-width="1"/><rect x="1" y="1" width="13" height="2.600" fill="#79a3e6"/><rect x="1" y="1" width="13" height="1" fill="#a9c4f0"/></svg><span id="t28" class="t" style="letter-spacing:-0.101px;top:89.0px;font-size:11px;line-height:14px;color:#2a3c70;left:1028px;">Zestawienie VAT</span><div style="left:1120px;top:83px;width:109px;height:23px;background:linear-gradient(#ffffff 25%,#d9e8f8);border:1px solid #adb1b8;border-radius:4px;"></div><svg style="left:1125px;top:89px;" width="14" height="14" viewBox="0 0 14 14"><circle cx="7" cy="7" r="6.500" fill="url(#addg)" stroke="#55a84e" stroke-width=".9"/><circle cx="7" cy="7" r="5.300" fill="none" stroke="#b4e0ad" stroke-width=".8" opacity=".85"/><path d="M4 7h6M7 4v6" stroke="#fff" stroke-width="2"/></svg><span id="t29" class="t" style="letter-spacing:-0.074px;top:88.0px;font-size:12px;line-height:16px;color:#26386c;font-weight:bold;left:1143px;">Dodaj zaliczkę</span><div style="left:1236px;top:83px;width:107px;height:23px;background:linear-gradient(#ffffff 25%,#d9e8f8);border:1px solid #adb1b8;border-radius:4px;"></div><svg style="left:1241px;top:89px;" width="14" height="14" viewBox="0 0 14 14"><circle cx="7" cy="7" r="6.500" fill="url(#addg)" stroke="#55a84e" stroke-width=".9"/><circle cx="7" cy="7" r="5.300" fill="none" stroke="#b4e0ad" stroke-width=".8" opacity=".85"/><path d="M4 7h6M7 4v6" stroke="#fff" stroke-width="2"/></svg><span id="t30" class="t" style="letter-spacing:0.332px;top:88.0px;font-size:12px;line-height:16px;color:#26386c;font-weight:bold;left:1259px;">Dodaj fakturę</span><div style="left:0px;top:118px;width:17px;height:514px;background:linear-gradient(to right,#ffffff 25%,#dbe3ef);border-left:2px solid #bdbdbd;border-top:2px solid #bdbdbd;box-sizing:border-box"></div><span id="t31" class="t" style="top:123.0px;font-size:13px;line-height:14px;color:#3a5cc8;left:6px;">»</span><span id="t32" class="t" style="letter-spacing:0.361px;top:315.5px;font-size:12px;line-height:14px;color:#2f55b8;left:3px;transform:rotate(-90deg);transform-origin:0 0;">Wyszukiwanie zaawansowane</span><svg style="left:2px;top:321px;transform:rotate(-90deg)" width="15" height="15" viewBox="0 0 16 16"><path d="M9.800 9.800l3.600 3.600" stroke="#c9802e" stroke-width="3" stroke-linecap="round"/><path d="M9.800 9.800l3.400 3.400" stroke="#e6a85a" stroke-width="1.200" stroke-linecap="round"/><circle cx="6.300" cy="6.300" r="4.900" fill="#cfe1f7" stroke="#a4c0e6" stroke-width="1.300"/><circle cx="5.500" cy="5.300" r="2.400" fill="#eef5fd" opacity=".9"/></svg><div style="left:30px;top:124px;width:127px;height:19px;background:#fdfcdc;border:1px solid;border-color:#6a6a6a #e4e4dc #e4e4dc #6a6a6a;box-sizing:border-box;box-shadow:inset 1px 1px 0 #8f8f8f"></div><span id="t33" class="t" style="letter-spacing:-0.023px;top:126.5px;font-size:12px;line-height:16px;color:#000;font-weight:bold;left:36px;">Data wystawienia</span><div style="left:140px;top:126px;width:17px;height:17px;background:linear-gradient(#ececec,#c9c9c9);border:1px solid #8a8a8a;box-sizing:border-box;border-radius:2px;box-shadow:inset 0 0 0 1px #fff"></div><svg style="left:145px;top:134px;" width="7" height="4" viewBox="0 0 7 4"><path d="M0 0h7L3.500 4z" fill="#000"/></svg><span id="t34" class="t" style="letter-spacing:-0.125px;top:127.5px;font-size:11px;line-height:14px;color:#000;left:165px;">od</span><div style="left:180px;top:125px;width:137px;height:18px;background:#fcfddd;border:1px solid;border-color:#6a6a6a #eef0e0 #eef0e0 #6a6a6a;box-sizing:border-box;box-shadow:inset 1px 1px 0 #9a9a9a"></div><span id="t35" class="t" style="letter-spacing:-0.028px;top:127.5px;font-size:11px;line-height:14px;color:#000;left:184px;">2013-01-01</span><div style="left:319px;top:124px;width:23px;height:21px;background:linear-gradient(#f8f8f8,#d9d9d9);border:1px solid #6a6a6a;box-sizing:border-box;border-radius:3px;box-shadow:inset 0 0 0 1px #fff"></div><span id="t36" class="t" style="top:127.0px;font-size:12px;line-height:16px;color:#111;font-weight:bold;left:331px;transform:translateX(-50%);letter-spacing:.6px;">...</span><span id="t37" class="t" style="letter-spacing:-0.125px;top:127.5px;font-size:11px;line-height:14px;color:#000;left:346px;">do</span><div style="left:361px;top:126px;width:136px;height:17px;background:#fff;border:1px solid #c9c9c9;box-sizing:border-box;border-radius:2px;border-top-color:#a9a9a9"></div><div style="left:498px;top:124px;width:23px;height:21px;background:linear-gradient(#f8f8f8,#d9d9d9);border:1px solid #6a6a6a;box-sizing:border-box;border-radius:3px;box-shadow:inset 0 0 0 1px #fff"></div><span id="t38" class="t" style="top:127.0px;font-size:12px;line-height:16px;color:#111;font-weight:bold;left:510px;transform:translateX(-50%);letter-spacing:.6px;">...</span><div style="left:531px;top:124px;width:55px;height:19px;background:linear-gradient(#ffffff 25%,#d9e8f8);border:1px solid #adb1b8;border-radius:4px;"></div><svg style="left:535px;top:127px;" width="16" height="16" viewBox="0 0 16 16"><path d="M3 4.600L4.600 3 8 6.400 11.400 3 13 4.600 9.600 8 13 11.400 11.400 13 8 9.600 4.600 13 3 11.400 6.400 8z" fill="#c4c4c4" stroke="#8e8e8e" stroke-width=".8"/></svg><span id="t39" class="t" style="letter-spacing:-0.180px;top:128.0px;font-size:11px;line-height:14px;color:#2a3a6a;left:552px;">Anuluj</span><span id="t40" class="t" style="letter-spacing:0.158px;top:127.5px;font-size:11px;line-height:14px;color:#000;left:605px;">Waluta:</span><div style="left:647px;top:126px;width:45px;height:17px;background:#fff;border:1px solid #d3d7dd;box-sizing:border-box;border-radius:2px"></div><svg style="left:680.5px;top:134px;" width="7" height="4" viewBox="0 0 7 4"><path d="M0 0h7L3.500 4z" fill="#000"/></svg><div style="left:1154px;top:130px;width:13px;height:13px;background:linear-gradient(135deg,#d8d8d8,#fff);border:1px solid #8a8a8a;box-sizing:border-box;box-shadow:inset 0 0 0 1px #f2f2f2"></div><span id="t41" class="t" style="letter-spacing:-0.220px;top:130.5px;font-size:11px;line-height:14px;color:#000;left:1169px;">Uwzględnij</span><div style="left:1224px;top:127px;width:120px;height:18px;background:linear-gradient(#ffffff 25%,#d9e8f8);border:1px solid #adb1b8;border-radius:4px;"></div><svg style="left:1229px;top:130px;" width="14" height="14" viewBox="0 0 16 16"><path d="M9.800 9.800l3.600 3.600" stroke="#c9802e" stroke-width="3" stroke-linecap="round"/><path d="M9.800 9.800l3.400 3.400" stroke="#e6a85a" stroke-width="1.200" stroke-linecap="round"/><circle cx="6.300" cy="6.300" r="4.900" fill="#cfe1f7" stroke="#a4c0e6" stroke-width="1.300"/><circle cx="5.500" cy="5.300" r="2.400" fill="#eef5fd" opacity=".9"/></svg><span id="t42" class="t" style="letter-spacing:-0.148px;top:130.5px;font-size:11px;line-height:14px;color:#2a3c70;left:1246px;">kryteria kontaktów</span><div style="left:25px;top:157px;width:1304px;height:406px;background:#fff"></div><div style="left:25px;top:157px;width:1304px;height:44px;background:linear-gradient(#d2deeb 0%,#e3ebf4 25%,#ffffff 58%)"></div><div style="left:25px;top:157px;width:1304px;height:1px;background:#c3c6cb"></div><span id="t43" class="t" style="letter-spacing:0.182px;top:170.0px;font-size:12px;line-height:16px;color:#3558c0;font-weight:bold;left:77.5px;transform:translateX(-50%);">Typ</span><span id="t44" class="t" style="letter-spacing:-0.004px;top:170.0px;font-size:12px;line-height:16px;color:#3558c0;font-weight:bold;left:118.0px;transform:translateX(-50%);">Stan</span><span id="t45" class="t" style="letter-spacing:-0.203px;top:170.0px;font-size:12px;line-height:16px;color:#3558c0;font-weight:bold;left:217.0px;transform:translateX(-50%);">Numer</span><span id="t46" class="t" style="letter-spacing:0.000px;top:170.0px;font-size:12px;line-height:16px;color:#3558c0;font-weight:bold;left:396.5px;transform:translateX(-50%);">Kontrahent</span><span id="t47" class="t" style="letter-spacing:-0.668px;top:170.0px;font-size:12px;line-height:16px;color:#3558c0;font-weight:bold;left:576.0px;transform:translateX(-50%);">Opis</span><span id="t48" class="t" style="letter-spacing:-0.040px;top:170.0px;font-size:12px;line-height:16px;color:#3558c0;font-weight:bold;left:702.0px;transform:translateX(-50%);">Kategoria</span><span id="t49" class="t" style="letter-spacing:0.246px;top:170.0px;font-size:12px;line-height:16px;color:#3558c0;font-weight:bold;left:791.5px;transform:translateX(-50%);">Data</span><span id="t50" class="t" style="letter-spacing:0.066px;top:170.0px;font-size:12px;line-height:16px;color:#3558c0;font-weight:bold;left:884.0px;transform:translateX(-50%);">Netto</span><span id="t51" class="t" style="letter-spacing:-0.406px;top:170.0px;font-size:12px;line-height:16px;color:#3558c0;font-weight:bold;left:969.0px;transform:translateX(-50%);">VAT</span><span id="t52" class="t" style="letter-spacing:0.000px;top:170.0px;font-size:12px;line-height:16px;color:#3558c0;font-weight:bold;left:1054.0px;transform:translateX(-50%);">Brutto</span><span id="t53" class="t" style="letter-spacing:0.146px;top:170.0px;font-size:12px;line-height:16px;color:#3558c0;font-weight:bold;left:1142.5px;transform:translateX(-50%);">Termin</span><span id="t54" class="t" style="letter-spacing:0.052px;top:170.0px;font-size:12px;line-height:16px;color:#000;font-weight:bold;left:1216.0px;transform:translateX(-50%);">Status</span><span id="t55" class="t" style="letter-spacing:0.098px;top:170.0px;font-size:12px;line-height:16px;color:#3558c0;font-weight:bold;left:1286.0px;transform:translateX(-50%);">Do zapłaty</span><span id="t56" class="t" style="top:172.0px;font-size:11px;line-height:14px;color:#a04cb4;left:806.5px;">↓</span><div style="left:31px;top:168px;width:20px;height:20px;background:linear-gradient(#fff,#dce7f4);border:1px solid #aab4c2;border-radius:3px"></div><svg style="left:34px;top:171px;" width="16" height="16" viewBox="0 0 16 16"><rect x="1" y="1" width="9" height="9" fill="#fff" stroke="#2a3860" stroke-width=".9"/><rect x="3.500" y="3.500" width="9" height="9" fill="#fff" stroke="#2a3860" stroke-width=".9"/><rect x="6" y="6" width="9" height="9" fill="#fff" stroke="#2a3860" stroke-width=".9"/><path d="M8 10.400l1.900 2 3.200-4" fill="none" stroke="#1a2a44" stroke-width="1.300"/></svg><div style="left:28px;top:200px;width:27px;height:1px;background:#c4c4c4"></div><div style="left:28px;top:201px;width:27px;height:1px;background:#ececec"></div><div style="left:60px;top:200px;width:35px;height:1px;background:#c4c4c4"></div><div style="left:60px;top:201px;width:35px;height:1px;background:#ececec"></div><div style="left:100px;top:200px;width:36px;height:1px;background:#c4c4c4"></div><div style="left:100px;top:201px;width:36px;height:1px;background:#ececec"></div><div style="left:141px;top:200px;width:152px;height:1px;background:#c4c4c4"></div><div style="left:141px;top:201px;width:152px;height:1px;background:#ececec"></div><div style="left:298px;top:200px;width:197px;height:1px;background:#c4c4c4"></div><div style="left:298px;top:201px;width:197px;height:1px;background:#ececec"></div><div style="left:500px;top:200px;width:152px;height:1px;background:#c4c4c4"></div><div style="left:500px;top:201px;width:152px;height:1px;background:#ececec"></div><div style="left:657px;top:200px;width:90px;height:1px;background:#c4c4c4"></div><div style="left:657px;top:201px;width:90px;height:1px;background:#ececec"></div><div style="left:752px;top:200px;width:87px;height:1px;background:#c4c4c4"></div><div style="left:752px;top:201px;width:87px;height:1px;background:#ececec"></div><div style="left:844px;top:200px;width:80px;height:1px;background:#c4c4c4"></div><div style="left:844px;top:201px;width:80px;height:1px;background:#ececec"></div><div style="left:929px;top:200px;width:80px;height:1px;background:#c4c4c4"></div><div style="left:929px;top:201px;width:80px;height:1px;background:#ececec"></div><div style="left:1014px;top:200px;width:80px;height:1px;background:#c4c4c4"></div><div style="left:1014px;top:201px;width:80px;height:1px;background:#ececec"></div><div style="left:1099px;top:200px;width:87px;height:1px;background:#c4c4c4"></div><div style="left:1099px;top:201px;width:87px;height:1px;background:#ececec"></div><div style="left:1191px;top:200px;width:50px;height:1px;background:#c4c4c4"></div><div style="left:1191px;top:201px;width:50px;height:1px;background:#ececec"></div><div style="left:1246px;top:200px;width:80px;height:1px;background:#c4c4c4"></div><div style="left:1246px;top:201px;width:80px;height:1px;background:#ececec"></div><span id="t57" class="t" style="letter-spacing:0.023px;top:203.5px;font-size:10px;line-height:13px;color:#7a6a5a;left:27.5px;">szukaj</span><svg style="left:35px;top:217px;" width="12" height="10" viewBox="0 0 12 10"><path d="M1 5h9.500M6.500 1l4 4-4 4" fill="none" stroke="#222" stroke-width=".9"/></svg><div style="left:62px;top:203px;width:32px;height:17px;background:#fff;border:1px solid #d6dbe2;border-top-color:#b8bec8;box-sizing:border-box;border-radius:2px;"></div><svg style="left:83px;top:210px;" width="8" height="4.5" viewBox="0 0 8 4.5"><path d="M0 0h8L4 4.500z" fill="#000"/></svg><div style="left:102px;top:203px;width:32px;height:17px;background:#fff;border:1px solid #d6dbe2;border-top-color:#b8bec8;box-sizing:border-box;border-radius:2px;"></div><svg style="left:123px;top:210px;" width="8" height="4.5" viewBox="0 0 8 4.5"><path d="M0 0h8L4 4.500z" fill="#000"/></svg><div style="left:141px;top:203px;width:144px;height:17px;background:#fff;border:1px solid #d6dbe2;border-top-color:#b8bec8;box-sizing:border-box;border-radius:2px;"></div><div style="left:303px;top:203px;width:187px;height:17px;background:#fff;border:1px solid #d6dbe2;border-top-color:#b8bec8;box-sizing:border-box;border-radius:2px;"></div><div style="left:500px;top:203px;width:144px;height:17px;background:#fff;border:1px solid #d6dbe2;border-top-color:#b8bec8;box-sizing:border-box;border-radius:2px;"></div><div style="left:662px;top:203px;width:81px;height:17px;background:#fff;border:1px solid #d6dbe2;border-top-color:#b8bec8;box-sizing:border-box;border-radius:2px;"></div><svg style="left:732px;top:210px;" width="8" height="4.5" viewBox="0 0 8 4.5"><path d="M0 0h8L4 4.500z" fill="#000"/></svg><div style="left:761px;top:203px;width:70px;height:17px;background:#fff;border:1px solid #d6dbe2;border-top-color:#b8bec8;box-sizing:border-box;border-radius:2px;"></div><svg style="left:820px;top:210px;" width="8" height="4.5" viewBox="0 0 8 4.5"><path d="M0 0h8L4 4.500z" fill="#000"/></svg><div style="left:852px;top:203px;width:30px;height:17px;background:#fff;border:1px solid #d6dbe2;border-top-color:#b8bec8;box-sizing:border-box;border-radius:2px;"></div><svg style="left:871px;top:210px;" width="8" height="4.5" viewBox="0 0 8 4.5"><path d="M0 0h8L4 4.500z" fill="#000"/></svg><div style="left:885px;top:203px;width:39px;height:17px;background:#fff;border:1px solid #d6dbe2;border-top-color:#b8bec8;box-sizing:border-box;border-radius:2px;"></div><div style="left:941px;top:203px;width:30px;height:17px;background:#fff;border:1px solid #d6dbe2;border-top-color:#b8bec8;box-sizing:border-box;border-radius:2px;"></div><svg style="left:960px;top:210px;" width="8" height="4.5" viewBox="0 0 8 4.5"><path d="M0 0h8L4 4.500z" fill="#000"/></svg><div style="left:974px;top:203px;width:36px;height:17px;background:#fff;border:1px solid #d6dbe2;border-top-color:#b8bec8;box-sizing:border-box;border-radius:2px;"></div><div style="left:1026px;top:203px;width:30px;height:17px;background:#fff;border:1px solid #d6dbe2;border-top-color:#b8bec8;box-sizing:border-box;border-radius:2px;"></div><svg style="left:1045px;top:210px;" width="8" height="4.5" viewBox="0 0 8 4.5"><path d="M0 0h8L4 4.500z" fill="#000"/></svg><div style="left:1059px;top:203px;width:35px;height:17px;background:#fff;border:1px solid #d6dbe2;border-top-color:#b8bec8;box-sizing:border-box;border-radius:2px;"></div><div style="left:1105px;top:203px;width:75px;height:17px;background:#fff;border:1px solid #d6dbe2;border-top-color:#b8bec8;box-sizing:border-box;border-radius:2px;"></div><svg style="left:1169px;top:210px;" width="8" height="4.5" viewBox="0 0 8 4.5"><path d="M0 0h8L4 4.500z" fill="#000"/></svg><div style="left:1191px;top:203px;width:50px;height:17px;background:#fff;border:1px solid #d6dbe2;border-top-color:#b8bec8;box-sizing:border-box;border-radius:2px;"></div><svg style="left:1230px;top:210px;" width="8" height="4.5" viewBox="0 0 8 4.5"><path d="M0 0h8L4 4.500z" fill="#000"/></svg><div style="left:1250px;top:203px;width:34px;height:17px;background:#fff;border:1px solid #d6dbe2;border-top-color:#b8bec8;box-sizing:border-box;border-radius:2px;"></div><svg style="left:1273px;top:210px;" width="8" height="4.5" viewBox="0 0 8 4.5"><path d="M0 0h8L4 4.500z" fill="#000"/></svg><div style="left:1287px;top:203px;width:39px;height:17px;background:#fff;border:1px solid #d6dbe2;border-top-color:#b8bec8;box-sizing:border-box;border-radius:2px;"></div><div style="left:25px;top:232px;width:1304px;height:2px;background:#c0c0c0"></div><div style="left:25px;top:233px;width:1304px;height:305px;overflow:hidden"><div id="rows" style="position:absolute;left:-25px;top:-233px;width:1332px;height:632px"><div style="left:25px;top:268px;width:1304px;height:1px;background:#c6c6c6"></div><div style="left:35px;top:243px;width:13px;height:13px;background:linear-gradient(135deg,#c6c9cf,#f6f6f6 85%);border:1px solid #8e8f8f;box-sizing:border-box;box-shadow:inset 0 0 0 1px #f7f7f7"></div><span id="t58" class="t" style="letter-spacing:-0.781px;top:245.0px;font-size:11px;line-height:14px;color:#000;left:66px;">PRO</span><svg style="left:110px;top:244px;" width="17" height="17" viewBox="0 0 16 16"><g transform="rotate(45 8 8)"><rect x="5.300" y="-1" width="5.400" height="12.600" fill="#f8de5a" stroke="#d8922c" stroke-width=".9"/><path d="M7.100 -1v12.600M8.900 -1v12.600" stroke="#ecbf3c" stroke-width=".6"/><path d="M5.300 11.600L8 16.600l2.700-5z" fill="#f2d9b0" stroke="#c98432" stroke-width=".8"/><path d="M7.200 15.100l.8 1.500.8-1.500z" fill="#6a4a2a"/><rect x="5.300" y="-3" width="5.400" height="2.200" rx=".8" fill="#f0b0a8" stroke="#d8922c" stroke-width=".7"/></g></svg><span id="t59" class="t" style="letter-spacing:-0.125px;top:245.0px;font-size:11px;line-height:14px;color:#000;left:140px;">PROFV/002/06/2013</span><span id="t60" class="t" style="letter-spacing:-0.533px;top:244.0px;font-size:12px;line-height:16px;color:#3558c0;font-weight:bold;left:298px;">ABC sp. z o. o.</span><span id="t61" class="t" style="top:245.0px;font-size:11px;line-height:14px;color:#000;left:795.5px;transform:translateX(-50%);">2013-06-11</span><span id="t62" class="t" style="top:245.0px;font-size:11px;line-height:14px;color:#000;right:408px;">75,00</span><span id="t63" class="t" style="top:245.0px;font-size:11px;line-height:14px;color:#000;right:323px;">17,25</span><span id="t64" class="t" style="top:244.0px;font-size:12px;line-height:16px;color:#000;font-weight:bold;right:237.5px;">92,25</span><span id="t65" class="t" style="top:237.0px;font-size:11px;line-height:15px;color:#ff0000;left:1142.5px;transform:translateX(-50%);">2013-06-25</span><span id="t66" class="t" style="top:252.0px;font-size:11px;line-height:15px;color:#ff0000;left:1142.5px;transform:translateX(-50%);">(13 dni)</span><svg style="left:1207.5px;top:243px;" width="17" height="17" viewBox="0 0 16 16"><path d="M2 4.100L4.100 2 8 5.900 11.900 2 14 4.100 10.100 8 14 11.900 11.900 14 8 10.100 4.100 14 2 11.900 5.900 8z" fill="#f0525e" stroke="#f79aa2" stroke-width=".9" stroke-linejoin="round"/></svg><span id="t67" class="t" style="top:245.0px;font-size:11px;line-height:14px;color:#000;right:6px;">92,25</span><div style="left:25px;top:303px;width:1304px;height:1px;background:#c6c6c6"></div><div style="left:35px;top:278px;width:13px;height:13px;background:linear-gradient(135deg,#c6c9cf,#f6f6f6 85%);border:1px solid #8e8f8f;box-sizing:border-box;box-shadow:inset 0 0 0 1px #f7f7f7"></div><span id="t68" class="t" style="letter-spacing:-0.781px;top:280.0px;font-size:11px;line-height:14px;color:#000;left:66px;">PRO</span><svg style="left:110px;top:279px;" width="17" height="17" viewBox="0 0 16 16"><g transform="rotate(45 8 8)"><rect x="5.300" y="-1" width="5.400" height="12.600" fill="#f8de5a" stroke="#d8922c" stroke-width=".9"/><path d="M7.100 -1v12.600M8.900 -1v12.600" stroke="#ecbf3c" stroke-width=".6"/><path d="M5.300 11.600L8 16.600l2.700-5z" fill="#f2d9b0" stroke="#c98432" stroke-width=".8"/><path d="M7.200 15.100l.8 1.500.8-1.500z" fill="#6a4a2a"/><rect x="5.300" y="-3" width="5.400" height="2.200" rx=".8" fill="#f0b0a8" stroke="#d8922c" stroke-width=".7"/></g></svg><span id="t69" class="t" style="letter-spacing:-0.125px;top:280.0px;font-size:11px;line-height:14px;color:#000;left:140px;">PROFV/001/06/2013</span><span id="t70" class="t" style="letter-spacing:-0.086px;top:279.0px;font-size:12px;line-height:16px;color:#3558c0;font-weight:bold;left:298px;">1 Medical Center</span><span id="t71" class="t" style="top:280.0px;font-size:11px;line-height:14px;color:#000;left:795.5px;transform:translateX(-50%);">2013-06-11</span><span id="t72" class="t" style="top:280.0px;font-size:11px;line-height:14px;color:#000;right:408px;">75,00</span><span id="t73" class="t" style="top:280.0px;font-size:11px;line-height:14px;color:#000;right:323px;">17,25</span><span id="t74" class="t" style="top:279.0px;font-size:12px;line-height:16px;color:#000;font-weight:bold;right:237.5px;">92,25</span><span id="t75" class="t" style="top:272.0px;font-size:11px;line-height:15px;color:#ff0000;left:1142.5px;transform:translateX(-50%);">2013-06-25</span><span id="t76" class="t" style="top:287.0px;font-size:11px;line-height:15px;color:#ff0000;left:1142.5px;transform:translateX(-50%);">(13 dni)</span><svg style="left:1207.5px;top:278px;" width="17" height="17" viewBox="0 0 16 16"><path d="M2 4.100L4.100 2 8 5.900 11.900 2 14 4.100 10.100 8 14 11.900 11.900 14 8 10.100 4.100 14 2 11.900 5.900 8z" fill="#f0525e" stroke="#f79aa2" stroke-width=".9" stroke-linejoin="round"/></svg><span id="t77" class="t" style="top:280.0px;font-size:11px;line-height:14px;color:#000;right:6px;">92,25</span><div style="left:25px;top:338px;width:1304px;height:1px;background:#c6c6c6"></div><div style="left:35px;top:313px;width:13px;height:13px;background:linear-gradient(135deg,#c6c9cf,#f6f6f6 85%);border:1px solid #8e8f8f;box-sizing:border-box;box-shadow:inset 0 0 0 1px #f7f7f7"></div><svg style="left:110px;top:314px;" width="17" height="17" viewBox="0 0 16 16"><g transform="rotate(45 8 8)"><rect x="5.300" y="-1" width="5.400" height="12.600" fill="#f8de5a" stroke="#d8922c" stroke-width=".9"/><path d="M7.100 -1v12.600M8.900 -1v12.600" stroke="#ecbf3c" stroke-width=".6"/><path d="M5.300 11.600L8 16.600l2.700-5z" fill="#f2d9b0" stroke="#c98432" stroke-width=".8"/><path d="M7.200 15.100l.8 1.500.8-1.500z" fill="#6a4a2a"/><rect x="5.300" y="-3" width="5.400" height="2.200" rx=".8" fill="#f0b0a8" stroke="#d8922c" stroke-width=".7"/></g></svg><span id="t78" class="t" style="letter-spacing:-0.086px;top:314.0px;font-size:12px;line-height:16px;color:#3558c0;font-weight:bold;left:298px;">1 Medical Center</span><span id="t79" class="t" style="top:315.0px;font-size:11px;line-height:14px;color:#000;left:795.5px;transform:translateX(-50%);">2013-06-07</span><span id="t80" class="t" style="top:315.0px;font-size:11px;line-height:14px;color:#000;right:408px;">10,00</span><span id="t81" class="t" style="top:315.0px;font-size:11px;line-height:14px;color:#000;right:323px;">2,30</span><span id="t82" class="t" style="top:314.0px;font-size:12px;line-height:16px;color:#000;font-weight:bold;right:237.5px;">12,30</span><span id="t83" class="t" style="top:307.0px;font-size:11px;line-height:15px;color:#ff0000;left:1142.5px;transform:translateX(-50%);">2013-06-21</span><span id="t84" class="t" style="top:322.0px;font-size:11px;line-height:15px;color:#ff0000;left:1142.5px;transform:translateX(-50%);">(17 dni)</span><svg style="left:1207.5px;top:313px;" width="17" height="17" viewBox="0 0 16 16"><path d="M2 4.100L4.100 2 8 5.900 11.900 2 14 4.100 10.100 8 14 11.900 11.900 14 8 10.100 4.100 14 2 11.900 5.900 8z" fill="#f0525e" stroke="#f79aa2" stroke-width=".9" stroke-linejoin="round"/></svg><span id="t85" class="t" style="top:315.0px;font-size:11px;line-height:14px;color:#000;right:6px;">12,30</span><div style="left:25px;top:339px;width:1304px;height:34px;background:#ffffdd"></div><div style="left:25px;top:373px;width:1304px;height:1px;background:#c6c6c6"></div><div style="left:35px;top:348px;width:13px;height:13px;background:linear-gradient(135deg,#c6c9cf,#f6f6f6 85%);border:1px solid #8e8f8f;box-sizing:border-box;box-shadow:inset 0 0 0 1px #f7f7f7"></div><svg style="left:37px;top:350px;" width="9" height="9" viewBox="0 0 9 9"><path d="M1 4.200l2.400 2.900 4.600-6.600" fill="none" stroke="#3046a0" stroke-width="1.700"/></svg><span id="t86" class="t" style="letter-spacing:-1.000px;top:350.0px;font-size:11px;line-height:14px;color:#000;left:71.5px;">FV</span><svg style="left:110px;top:348px;" width="16" height="16" viewBox="0 0 16 16"><path d="M2.200 8.400l1.900-1.800 2.500 2.400 6-6.600 2 1.700-7.900 8.800z" fill="#74acec" stroke="#5a94de" stroke-width=".6" stroke-linejoin="round"/></svg><span id="t87" class="t" style="top:350.0px;font-size:11px;line-height:14px;color:#000;left:140px;">FV/001/06/2013</span><span id="t88" class="t" style="top:350.0px;font-size:11px;line-height:14px;color:#000;left:795.5px;transform:translateX(-50%);">2013-06-07</span><span id="t89" class="t" style="top:350.0px;font-size:11px;line-height:14px;color:#000;right:408px;">1 150,00</span><span id="t90" class="t" style="top:350.0px;font-size:11px;line-height:14px;color:#000;right:323px;">264,50</span><span id="t91" class="t" style="top:349.0px;font-size:12px;line-height:16px;color:#000;font-weight:bold;right:237.5px;">1 414,50</span><span id="t92" class="t" style="top:342.0px;font-size:11px;line-height:15px;color:#ff0000;left:1142.5px;transform:translateX(-50%);">2013-06-21</span><span id="t93" class="t" style="top:357.0px;font-size:11px;line-height:15px;color:#ff0000;left:1142.5px;transform:translateX(-50%);">(17 dni)</span><svg style="left:1207.5px;top:348px;" width="17" height="17" viewBox="0 0 16 16"><path d="M2 4.100L4.100 2 8 5.900 11.900 2 14 4.100 10.100 8 14 11.900 11.900 14 8 10.100 4.100 14 2 11.900 5.900 8z" fill="#f0525e" stroke="#f79aa2" stroke-width=".9" stroke-linejoin="round"/></svg><span id="t94" class="t" style="top:350.0px;font-size:11px;line-height:14px;color:#000;right:6px;">1 414,50</span><div style="left:25px;top:408px;width:1304px;height:1px;background:#c6c6c6"></div><div style="left:35px;top:383px;width:13px;height:13px;background:linear-gradient(135deg,#c6c9cf,#f6f6f6 85%);border:1px solid #8e8f8f;box-sizing:border-box;box-shadow:inset 0 0 0 1px #f7f7f7"></div><span id="t95" class="t" style="letter-spacing:-0.781px;top:385.0px;font-size:11px;line-height:14px;color:#000;left:66px;">PRO</span><svg style="left:110px;top:384px;" width="17" height="17" viewBox="0 0 16 16"><g transform="rotate(45 8 8)"><rect x="5.300" y="-1" width="5.400" height="12.600" fill="#f8de5a" stroke="#d8922c" stroke-width=".9"/><path d="M7.100 -1v12.600M8.900 -1v12.600" stroke="#ecbf3c" stroke-width=".6"/><path d="M5.300 11.600L8 16.600l2.700-5z" fill="#f2d9b0" stroke="#c98432" stroke-width=".8"/><path d="M7.200 15.100l.8 1.500.8-1.500z" fill="#6a4a2a"/><rect x="5.300" y="-3" width="5.400" height="2.200" rx=".8" fill="#f0b0a8" stroke="#d8922c" stroke-width=".7"/></g></svg><span id="t96" class="t" style="top:385.0px;font-size:11px;line-height:14px;color:#000;left:795.5px;transform:translateX(-50%);">2013-06-07</span><span id="t97" class="t" style="top:385.0px;font-size:11px;line-height:14px;color:#000;right:408px;">115,00</span><span id="t98" class="t" style="top:385.0px;font-size:11px;line-height:14px;color:#000;right:323px;">26,45</span><span id="t99" class="t" style="top:384.0px;font-size:12px;line-height:16px;color:#000;font-weight:bold;right:237.5px;">141,45</span><span id="t100" class="t" style="top:377.0px;font-size:11px;line-height:15px;color:#ff0000;left:1142.5px;transform:translateX(-50%);">2013-06-21</span><span id="t101" class="t" style="top:392.0px;font-size:11px;line-height:15px;color:#ff0000;left:1142.5px;transform:translateX(-50%);">(17 dni)</span><svg style="left:1207.5px;top:383px;" width="17" height="17" viewBox="0 0 16 16"><path d="M2 4.100L4.100 2 8 5.900 11.900 2 14 4.100 10.100 8 14 11.900 11.900 14 8 10.100 4.100 14 2 11.900 5.900 8z" fill="#f0525e" stroke="#f79aa2" stroke-width=".9" stroke-linejoin="round"/></svg><span id="t102" class="t" style="top:385.0px;font-size:11px;line-height:14px;color:#000;right:6px;">141,45</span><div style="left:25px;top:409px;width:1304px;height:34px;background:#ffffdd"></div><div style="left:25px;top:443px;width:1304px;height:1px;background:#c6c6c6"></div><div style="left:35px;top:418px;width:13px;height:13px;background:linear-gradient(135deg,#c6c9cf,#f6f6f6 85%);border:1px solid #8e8f8f;box-sizing:border-box;box-shadow:inset 0 0 0 1px #f7f7f7"></div><svg style="left:37px;top:420px;" width="9" height="9" viewBox="0 0 9 9"><path d="M1 4.200l2.400 2.900 4.600-6.600" fill="none" stroke="#3046a0" stroke-width="1.700"/></svg><span id="t103" class="t" style="letter-spacing:-1.000px;top:420.0px;font-size:11px;line-height:14px;color:#000;left:71.5px;">FV</span><svg style="left:110px;top:418px;" width="16" height="16" viewBox="0 0 16 16"><path d="M2.200 8.400l1.900-1.800 2.500 2.400 6-6.600 2 1.700-7.900 8.800z" fill="#74acec" stroke="#5a94de" stroke-width=".6" stroke-linejoin="round"/></svg><span id="t104" class="t" style="top:420.0px;font-size:11px;line-height:14px;color:#000;left:140px;">FV/003/03/2013</span><span id="t105" class="t" style="top:420.0px;font-size:11px;line-height:14px;color:#000;left:795.5px;transform:translateX(-50%);">2013-03-26</span><span id="t106" class="t" style="top:420.0px;font-size:11px;line-height:14px;color:#000;right:408px;">169,00</span><span id="t107" class="t" style="top:420.0px;font-size:11px;line-height:14px;color:#000;right:323px;">37,18</span><span id="t108" class="t" style="top:419.0px;font-size:12px;line-height:16px;color:#000;font-weight:bold;right:237.5px;">206,18</span><span id="t109" class="t" style="top:412.0px;font-size:11px;line-height:15px;color:#b07a6a;left:1142.5px;transform:translateX(-50%);"><span style="color:#0a8a0a">zapł.</span>/sp.14 dni</span><span id="t110" class="t" style="top:427.0px;font-size:11px;line-height:15px;color:#b07a6a;left:1142.5px;transform:translateX(-50%);">2013-04-23</span><svg style="left:1207.5px;top:419px;" width="16" height="16" viewBox="0 0 16 16"><path d="M1.600 8.800l1.900-2 3 2.600 6.400-7 2 1.700-8.300 9.300z" fill="#b07060" stroke="#8a4d40" stroke-width=".5"/></svg><div style="left:25px;top:444px;width:1304px;height:34px;background:#ffffdd"></div><div style="left:25px;top:478px;width:1304px;height:1px;background:#c6c6c6"></div><div style="left:35px;top:453px;width:13px;height:13px;background:linear-gradient(135deg,#c6c9cf,#f6f6f6 85%);border:1px solid #8e8f8f;box-sizing:border-box;box-shadow:inset 0 0 0 1px #f7f7f7"></div><svg style="left:37px;top:455px;" width="9" height="9" viewBox="0 0 9 9"><path d="M1 4.200l2.400 2.900 4.600-6.600" fill="none" stroke="#3046a0" stroke-width="1.700"/></svg><span id="t111" class="t" style="letter-spacing:-1.000px;top:455.0px;font-size:11px;line-height:14px;color:#000;left:71.5px;">FV</span><svg style="left:110px;top:453px;" width="16" height="16" viewBox="0 0 16 16"><path d="M2.200 8.400l1.900-1.800 2.500 2.400 6-6.600 2 1.700-7.900 8.800z" fill="#74acec" stroke="#5a94de" stroke-width=".6" stroke-linejoin="round"/></svg><span id="t112" class="t" style="top:455.0px;font-size:11px;line-height:14px;color:#000;left:140px;">FV/002/02/2013</span><span id="t113" class="t" style="top:455.0px;font-size:11px;line-height:14px;color:#000;left:795.5px;transform:translateX(-50%);">2013-02-20</span><span id="t114" class="t" style="top:455.0px;font-size:11px;line-height:14px;color:#000;right:408px;">47,00</span><span id="t115" class="t" style="top:455.0px;font-size:11px;line-height:14px;color:#000;right:323px;">10,34</span><span id="t116" class="t" style="top:454.0px;font-size:12px;line-height:16px;color:#000;font-weight:bold;right:237.5px;">57,34</span><span id="t117" class="t" style="top:447.0px;font-size:11px;line-height:15px;color:#b07a6a;left:1142.5px;transform:translateX(-50%);"><span style="color:#0a8a0a">zapł.</span>/sp.48 dni</span><span id="t118" class="t" style="top:462.0px;font-size:11px;line-height:15px;color:#b07a6a;left:1142.5px;transform:translateX(-50%);">2013-04-23</span><svg style="left:1207.5px;top:454px;" width="16" height="16" viewBox="0 0 16 16"><path d="M1.600 8.800l1.900-2 3 2.600 6.400-7 2 1.700-8.300 9.300z" fill="#b07060" stroke="#8a4d40" stroke-width=".5"/></svg><div style="left:25px;top:513px;width:1304px;height:1px;background:#c6c6c6"></div><div style="left:35px;top:488px;width:13px;height:13px;background:linear-gradient(135deg,#c6c9cf,#f6f6f6 85%);border:1px solid #8e8f8f;box-sizing:border-box;box-shadow:inset 0 0 0 1px #f7f7f7"></div><span id="t119" class="t" style="letter-spacing:-1.000px;top:490.0px;font-size:11px;line-height:14px;color:#000;left:71.5px;">FV</span><svg style="left:110px;top:489px;" width="17" height="17" viewBox="0 0 16 16"><g transform="rotate(45 8 8)"><rect x="5.300" y="-1" width="5.400" height="12.600" fill="#f8de5a" stroke="#d8922c" stroke-width=".9"/><path d="M7.100 -1v12.600M8.900 -1v12.600" stroke="#ecbf3c" stroke-width=".6"/><path d="M5.300 11.600L8 16.600l2.700-5z" fill="#f2d9b0" stroke="#c98432" stroke-width=".8"/><path d="M7.200 15.100l.8 1.500.8-1.500z" fill="#6a4a2a"/><rect x="5.300" y="-3" width="5.400" height="2.200" rx=".8" fill="#f0b0a8" stroke="#d8922c" stroke-width=".7"/></g></svg><span id="t120" class="t" style="top:490.0px;font-size:11px;line-height:14px;color:#000;left:140px;">FV/001/02/2013</span><span id="t121" class="t" style="top:490.0px;font-size:11px;line-height:14px;color:#000;left:795.5px;transform:translateX(-50%);">2013-02-15</span><span id="t122" class="t" style="top:490.0px;font-size:11px;line-height:14px;color:#000;right:408px;">150,00</span><span id="t123" class="t" style="top:490.0px;font-size:11px;line-height:14px;color:#000;right:323px;">33,00</span><span id="t124" class="t" style="top:489.0px;font-size:12px;line-height:16px;color:#000;font-weight:bold;right:237.5px;">183,00</span><span id="t125" class="t" style="top:482.0px;font-size:11px;line-height:15px;color:#b07a6a;left:1142.5px;transform:translateX(-50%);"><span style="color:#0a8a0a">zapł.</span>/sp.67 dni</span><span id="t126" class="t" style="top:497.0px;font-size:11px;line-height:15px;color:#b07a6a;left:1142.5px;transform:translateX(-50%);">2013-04-23</span><svg style="left:1207.5px;top:489px;" width="16" height="16" viewBox="0 0 16 16"><path d="M1.600 8.800l1.900-2 3 2.600 6.400-7 2 1.700-8.300 9.300z" fill="#b07060" stroke="#8a4d40" stroke-width=".5"/></svg><div style="left:25px;top:514px;width:1304px;height:34px;background:#ffffdd"></div><div style="left:25px;top:548px;width:1304px;height:1px;background:#c6c6c6"></div><div style="left:35px;top:523px;width:13px;height:13px;background:linear-gradient(135deg,#c6c9cf,#f6f6f6 85%);border:1px solid #8e8f8f;box-sizing:border-box;box-shadow:inset 0 0 0 1px #f7f7f7"></div><svg style="left:37px;top:525px;" width="9" height="9" viewBox="0 0 9 9"><path d="M1 4.200l2.400 2.900 4.600-6.600" fill="none" stroke="#3046a0" stroke-width="1.700"/></svg><span id="t127" class="t" style="letter-spacing:-1.000px;top:525.0px;font-size:11px;line-height:14px;color:#000;left:71.5px;">FV</span><svg style="left:110px;top:523px;" width="16" height="16" viewBox="0 0 16 16"><path d="M2.200 8.400l1.900-1.800 2.500 2.400 6-6.600 2 1.700-7.900 8.800z" fill="#74acec" stroke="#5a94de" stroke-width=".6" stroke-linejoin="round"/></svg><span id="t128" class="t" style="top:525.0px;font-size:11px;line-height:14px;color:#000;left:140px;">FV/001/02/2013</span><span id="t129" class="t" style="top:525.0px;font-size:11px;line-height:14px;color:#000;left:795.5px;transform:translateX(-50%);">2013-02-15</span><span id="t130" class="t" style="top:525.0px;font-size:11px;line-height:14px;color:#000;right:408px;">750,00</span><span id="t131" class="t" style="top:525.0px;font-size:11px;line-height:14px;color:#000;right:323px;">165,00</span><span id="t132" class="t" style="top:524.0px;font-size:12px;line-height:16px;color:#000;font-weight:bold;right:237.5px;">915,00</span><span id="t133" class="t" style="top:517.0px;font-size:11px;line-height:15px;color:#b07a6a;left:1142.5px;transform:translateX(-50%);"><span style="color:#0a8a0a">zapł.</span>/sp.39 dni</span><span id="t134" class="t" style="top:532.0px;font-size:11px;line-height:15px;color:#b07a6a;left:1142.5px;transform:translateX(-50%);">2013-04-23</span><svg style="left:1207.5px;top:524px;" width="16" height="16" viewBox="0 0 16 16"><path d="M1.600 8.800l1.900-2 3 2.600 6.400-7 2 1.700-8.300 9.300z" fill="#b07060" stroke="#8a4d40" stroke-width=".5"/></svg></div></div><div style="left:25px;top:157px;width:1px;height:406px;background:#c6c6c6"></div><div style="left:57px;top:157px;width:1px;height:406px;background:#c6c6c6"></div><div style="left:97px;top:157px;width:1px;height:406px;background:#c6c6c6"></div><div style="left:138px;top:157px;width:1px;height:406px;background:#c6c6c6"></div><div style="left:295px;top:157px;width:1px;height:406px;background:#c6c6c6"></div><div style="left:497px;top:157px;width:1px;height:406px;background:#c6c6c6"></div><div style="left:654px;top:157px;width:1px;height:406px;background:#c6c6c6"></div><div style="left:749px;top:157px;width:1px;height:406px;background:#c6c6c6"></div><div style="left:841px;top:157px;width:1px;height:406px;background:#c6c6c6"></div><div style="left:926px;top:157px;width:1px;height:406px;background:#c6c6c6"></div><div style="left:1011px;top:157px;width:1px;height:406px;background:#c6c6c6"></div><div style="left:1096px;top:157px;width:1px;height:406px;background:#c6c6c6"></div><div style="left:1188px;top:157px;width:1px;height:406px;background:#c6c6c6"></div><div style="left:1243px;top:157px;width:1px;height:406px;background:#c6c6c6"></div><div style="left:1328px;top:157px;width:1px;height:406px;background:#c6c6c6"></div><div style="left:25px;top:537px;width:1304px;height:2px;background:#c0c0c0"></div><div style="left:25px;top:563px;width:1304px;height:1px;background:#c9c9c9"></div><span id="t135" class="t" style="top:540.0px;font-size:16px;line-height:21px;color:#5a5a5a;font-weight:bold;left:118px;transform:translateX(-50%);font-family:Liberation Serif;">Σ</span><span id="t136" class="t" style="top:543.5px;font-size:12px;line-height:16px;color:#000;font-weight:bold;left:141px;">RAZEM</span><span id="t137" class="t" style="top:543.5px;font-size:12px;line-height:16px;color:#000;font-weight:bold;right:408px;">5 220,15</span><span id="t138" class="t" style="top:543.5px;font-size:12px;line-height:16px;color:#000;font-weight:bold;right:323px;">1 189,47</span><span id="t139" class="t" style="top:543.5px;font-size:12px;line-height:16px;color:#000;font-weight:bold;right:237.5px;">6 409,62</span><span id="t140" class="t" style="top:543.5px;font-size:12px;line-height:16px;color:#000;font-weight:bold;right:6px;">1 752,75</span><div style="left:1329px;top:157px;width:3px;height:475px;background:#eff4fb"></div><svg style="left:35px;top:571px;" width="14" height="16" viewBox="0 0 14 16"><path d="M2.500 1v7c0 2.400 1.300 3.700 3.700 3.700h2.600V9.200l4.400 4-4.400 4v-2.500H6.200C2.200 14.700 0 12.200 0 8.500V1z" fill="#80ca6c" stroke="#368a30" stroke-width=".9" transform="translate(1.500 -.500) scale(.92)"/></svg><span id="t141" class="t" style="letter-spacing:-0.218px;top:572.0px;font-size:12px;line-height:16px;color:#000;font-weight:bold;left:51px;">Dla zaznaczonych:</span><div style="left:155px;top:570px;width:371px;height:18px;background:#fff;border-bottom:1px solid #a8c8ee;box-sizing:border-box"></div><div style="left:508px;top:570px;width:1px;height:18px;background:#6a8ab8"></div><div style="left:509px;top:570px;width:16px;height:18px;background:linear-gradient(#cfe6fb,#a9d0f5)"></div><svg style="left:513.5px;top:577.5px;" width="7" height="4" viewBox="0 0 7 4"><path d="M0 0h7L3.500 4z" fill="#000"/></svg><div style="left:51px;top:588px;width:13px;height:13px;background:linear-gradient(135deg,#cfcfcf,#fff);border:1px solid #9a9a9a;box-sizing:border-box;box-shadow:inset 0 0 0 1px #f4f4f4"></div><div style="left:33px;top:586px;width:124px;height:10px;background:rgba(249,139,82,.86)"></div><span id="t142" class="t" style="letter-spacing:-0.276px;top:590.0px;font-size:11px;line-height:14px;color:#222;left:66px;">Pokaż wiersz z podsumowaniem zaznaczonych</span><div style="left:25px;top:563px;width:1px;height:69px;background:#c4c7cc"></div><div style="left:1328px;top:563px;width:1px;height:69px;background:#c4c7cc"></div><div style="left:1045px;top:578px;width:102px;height:23px;background:linear-gradient(#ffffff 25%,#d9e8f8);border:1px solid #adb1b8;border-radius:4px;"></div><svg style="left:1050px;top:582px;" width="16" height="16" viewBox="0 0 16 16"><rect x=".5" y="1.200" width="13" height="13.300" fill="#fdfeff" stroke="#7ea2dc" stroke-width=".9"/><rect x="2" y="2.800" width="10" height="1.100" fill="#7cc46c"/><path d="M2 5.800h10M2 7.800h10M2 9.800h10M2 11.800h10" stroke="#b9cdea" stroke-width=".7"/><path d="M4.800 5v8" stroke="#b9cdea" stroke-width=".7"/><rect x="2" y="5.300" width="2.400" height="7" fill="#d7e4f6" opacity=".8"/><path d="M6 9.800h4V8l4.600 3.700L10 15.400v-1.800H6z" fill="#5fb54c" stroke="#2f8a28" stroke-width=".7" stroke-linejoin="round"/></svg><span id="t143" class="t" style="letter-spacing:0.028px;top:583.5px;font-size:11px;line-height:14px;color:#2a3c70;left:1067px;">eksport danych</span><div style="left:1154px;top:578px;width:153px;height:23px;background:linear-gradient(#ffffff 25%,#d9e8f8);border:1px solid #adb1b8;border-radius:4px;"></div><svg style="left:1159px;top:582px;" width="16" height="16" viewBox="0 0 16 16"><rect x=".5" y="1.200" width="13" height="13.300" fill="#fdfeff" stroke="#7ea2dc" stroke-width=".9"/><rect x="2" y="2.800" width="10" height="1.100" fill="#7cc46c"/><path d="M2 5.800h10M2 7.800h10M2 9.800h10M2 11.800h10" stroke="#b9cdea" stroke-width=".7"/><path d="M4.800 5v8" stroke="#b9cdea" stroke-width=".7"/><rect x="2" y="5.300" width="2.400" height="7" fill="#d7e4f6" opacity=".8"/><path d="M6 9.800h4V8l4.600 3.700L10 15.400v-1.800H6z" fill="#5fb54c" stroke="#2f8a28" stroke-width=".7" stroke-linejoin="round"/></svg><span id="t144" class="t" style="letter-spacing:0.065px;top:583.5px;font-size:11px;line-height:14px;color:#2a3c70;left:1176px;">eksport danych + pozycje</span><svg style="left:462px;top:609.5px;" width="16" height="16" viewBox="0 0 16 16"><circle cx="8" cy="8" r="7.600" fill="#d6e5fb" opacity=".9"/><circle cx="8" cy="8" r="6.300" fill="url(#pgb)" stroke="#a9bbd8" stroke-width="1"/><path d="M5 5v6" stroke="#4f86de" stroke-width="1.600"/><path d="M11 4.600v6.800L6.200 8z" fill="#4f86de"/></svg><svg style="left:478px;top:609.5px;" width="16" height="16" viewBox="0 0 16 16"><circle cx="8" cy="8" r="7.600" fill="#d6e5fb" opacity=".9"/><circle cx="8" cy="8" r="6.300" fill="url(#pgb)" stroke="#a9bbd8" stroke-width="1"/><path d="M8 4.800v6.400L4 8z M12 4.800v6.400L8 8z" fill="#4f86de"/></svg><svg style="left:494px;top:609.5px;" width="16" height="16" viewBox="0 0 16 16"><circle cx="8" cy="8" r="6.300" fill="url(#pgg)" stroke="#b5b5b5" stroke-width="1"/><path d="M10 4.600v6.800L5.200 8z" fill="#777777"/></svg><span id="t145" class="t" style="letter-spacing:-0.003px;top:609.0px;font-size:12px;line-height:16px;color:#000;font-weight:bold;left:519px;">strona 1 z 1</span><svg style="left:595px;top:609.5px;" width="16" height="16" viewBox="0 0 16 16"><circle cx="8" cy="8" r="6.300" fill="url(#pgg)" stroke="#b5b5b5" stroke-width="1"/><path d="M6.400 4.600v6.800L11.200 8z" fill="#777777"/></svg><svg style="left:611px;top:609.5px;" width="16" height="16" viewBox="0 0 16 16"><circle cx="8" cy="8" r="7.600" fill="#d6e5fb" opacity=".9"/><circle cx="8" cy="8" r="6.300" fill="url(#pgb)" stroke="#a9bbd8" stroke-width="1"/><path d="M4.500 4.800v6.400L8.500 8z M8.500 4.800v6.400L12.500 8z" fill="#4f86de"/></svg><svg style="left:627px;top:609.5px;" width="16" height="16" viewBox="0 0 16 16"><circle cx="8" cy="8" r="7.600" fill="#d6e5fb" opacity=".9"/><circle cx="8" cy="8" r="6.300" fill="url(#pgb)" stroke="#a9bbd8" stroke-width="1"/><path d="M11.300 5v6" stroke="#4f86de" stroke-width="1.600"/><path d="M5.400 4.600v6.800L10.200 8z" fill="#4f86de"/></svg><span id="t146" class="t" style="letter-spacing:-0.122px;top:609.0px;font-size:12px;line-height:16px;color:#000;font-weight:bold;left:651px;">na stronie:</span><div style="left:714px;top:608px;width:53px;height:17px;background:#fff;border:1px solid #d3d7dd;box-sizing:border-box;border-radius:2px;border-top-color:#b8bec8"></div><span id="t147" class="t" style="letter-spacing:0.323px;top:609.0px;font-size:12px;line-height:16px;color:#000;font-weight:bold;left:718px;">100</span><svg style="left:755px;top:615px;" width="8" height="4.5" viewBox="0 0 8 4.5"><path d="M0 0h8L4 4.500z" fill="#000"/></svg><span id="t148" class="t" style="letter-spacing:0.030px;top:609.0px;font-size:12px;line-height:16px;color:#000;font-weight:bold;left:776px;">wyświetlane: 11 z 11</span><div style="left:155px;top:349px;width:371px;height:220px;background:#fff;border:1px solid;border-color:#8c8c8c #000 #000 #8c8c8c"></div><span id="t149" class="t" style="letter-spacing:-0.080px;top:360.0px;font-size:12px;line-height:16px;color:#000;font-weight:bold;left:159px;">Przypisz dokument</span><span id="t150" class="t" style="letter-spacing:-0.116px;top:375.0px;font-size:12px;line-height:16px;color:#000;font-weight:bold;left:159px;">Usuń pow. z dokumentem</span><span id="t151" class="t" style="letter-spacing:-0.192px;top:390.0px;font-size:12px;line-height:16px;color:#000;font-weight:bold;left:159px;">Pobierz</span><span id="t152" class="t" style="letter-spacing:-0.082px;top:405.0px;font-size:12px;line-height:16px;color:#000;font-weight:bold;left:159px;">Oznacz jako zapłacone</span><span id="t153" class="t" style="letter-spacing:-0.116px;top:420.0px;font-size:12px;line-height:16px;color:#000;font-weight:bold;left:159px;">Generuj raport PDF do płatności i oznacz jako zapłacone</span><span id="t154" class="t" style="letter-spacing:-0.124px;top:435.0px;font-size:12px;line-height:16px;color:#000;font-weight:bold;left:159px;">Generuj raport PDF do płatności, NIE oznaczaj jako zapłacone</span><span id="t155" class="t" style="letter-spacing:0.012px;top:450.0px;font-size:12px;line-height:16px;color:#000;font-weight:bold;left:159px;">Wyślij emailem</span><div style="left:156px;top:466px;width:371px;height:15px;background:#3399ff"></div><span id="t156" class="t" style="letter-spacing:-0.047px;top:465.0px;font-size:12px;line-height:16px;color:#fff;font-weight:bold;left:159px;">Wyślij przypomnienie o fakturach</span><span id="t157" class="t" style="letter-spacing:-0.076px;top:480.0px;font-size:12px;line-height:16px;color:#000;font-weight:bold;left:159px;">Przypisz kategorie</span><span id="t158" class="t" style="letter-spacing:0.063px;top:495.0px;font-size:12px;line-height:16px;color:#000;font-weight:bold;left:159px;">Generuj fakturę z pro-form</span><span id="t159" class="t" style="letter-spacing:-0.068px;top:510.0px;font-size:12px;line-height:16px;color:#000;font-weight:bold;left:159px;">Przypisz do projektu</span><span id="t160" class="t" style="letter-spacing:-0.108px;top:525.0px;font-size:12px;line-height:16px;color:#000;font-weight:bold;left:159px;">Usuń przypisanie do projektu</span><span id="t161" class="t" style="letter-spacing:-0.127px;top:540.0px;font-size:12px;line-height:16px;color:#000;font-weight:bold;left:159px;">pokaż zaznaczone</span><span id="t162" class="t" style="letter-spacing:-0.050px;top:555.0px;font-size:12px;line-height:16px;color:#000;font-weight:bold;left:159px;">Kopiuj (utwórz nowe dokumenty jako kopie zaznaczonych)</span><div style="left:482.3px;top:0.6px;width:100.69999999999999px;height:47.4px;box-sizing:border-box;border:9.8px solid rgba(249,139,82,.88);border-radius:7px;"></div><div style="left:5.8px;top:45.7px;width:152.5px;height:41.599999999999994px;box-sizing:border-box;border:9.6px solid rgba(249,139,82,.88);border-radius:7px;"></div><div style="left:18.6px;top:333.4px;width:47.699999999999996px;height:215.10000000000002px;box-sizing:border-box;border:9.9px solid rgba(249,139,82,.88);border-radius:7px;"></div><div style="left:146px;top:456.4px;width:391.6px;height:31.80000000000001px;box-sizing:border-box;border:9.8px solid rgba(249,139,82,.88);border-radius:7px;border-right-width:10.4px;"></div></div></body></html>
